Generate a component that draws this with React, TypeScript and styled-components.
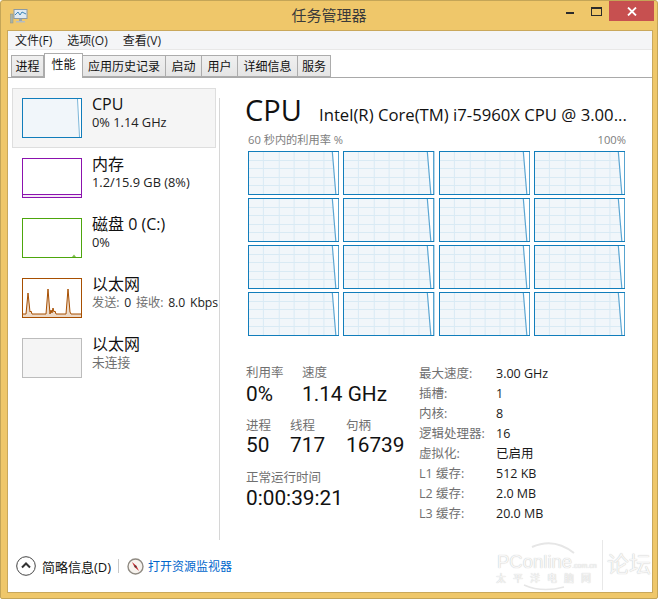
import React from "react";
import styled, { createGlobalStyle } from "styled-components";

const FONT = `"Open Sans", "Noto Sans", "Noto Sans CJK SC", sans-serif`;
const WM_FONT = `"Liberation Sans", "Noto Sans CJK SC", sans-serif`;

const Global = createGlobalStyle`
  html, body { margin: 0; padding: 0; background: #fff; }
  body { font-family: ${FONT}; color: #000; }
`;

const Page = styled.div`
  width: 660px;
  height: 600px;
  background: #fff;
  overflow: hidden;
`;
const Frame = styled.div`
  position: relative;
  box-sizing: border-box;
  width: 658px;
  height: 599px;
  background: #efc76a;
  border: 1px solid #c4a557;
  border-radius: 3px 3px 2px 2px;
  display: flex;
  flex-direction: column;
  overflow: hidden;
`;
const TitleBar = styled.div`
  position: relative;
  height: 29px;
  flex: none;
  display: flex;
  align-items: center;
  justify-content: center;
  font-size: 15px;
  color: #3a3a3a;
  padding-bottom: 2px;
  box-sizing: border-box;
`;
const AppIcon = styled.svg`
  position: absolute;
  left: 9px;
  top: 7px;
`;
const WinControls = styled.div`
  position: absolute;
  top: 0;
  right: 3px;
  display: flex;
  align-items: flex-start;
`;
const WinBtn = styled.div<{ $w: number; $bg?: string }>`
  width: ${(p) => p.$w}px;
  height: 20px;
  background: ${(p) => p.$bg ?? "transparent"};
  display: flex;
  align-items: center;
  justify-content: center;
`;
const Client = styled.div`
  box-sizing: border-box;
  margin: 0 4px 0 6px;
  height: 563px;
  flex: none;
  background: #fff;
  border: 1px solid #c9a85c;
  display: flex;
  flex-direction: column;
`;
const MenuBar = styled.div`
  box-sizing: border-box;
  height: 19px;
  flex: none;
  background: #f4f5f7;
  border-bottom: 1px solid #e8e8e8;
  display: flex;
  align-items: center;
  font-size: 12px;
  color: #1c1c1c;
  padding-left: 7px;
  gap: 15px;
`;
const TabRow = styled.div`
  box-sizing: border-box;
  height: 28px;
  flex: none;
  border-bottom: 1px solid #a9a9a9;
  display: flex;
  align-items: flex-end;
  padding-left: 3px;
`;
const Tab = styled.div<{ $w: number; $on?: boolean }>`
  box-sizing: border-box;
  width: ${(p) => p.$w}px;
  height: ${(p) => (p.$on ? 25 : 22)}px;
  margin-bottom: ${(p) => (p.$on ? -1 : 0)}px;
  border: 1px solid #acacac;
  border-left-width: ${(p) => (p.$on ? 1 : 0)}px;
  border-bottom: ${(p) => (p.$on ? "0" : "1px solid #acacac")};
  background: ${(p) => (p.$on ? "#fff" : "linear-gradient(#f0f0f0, #e5e5e5)")};
  font-size: 12px;
  line-height: ${(p) => (p.$on ? 22 : 21)}px;
  color: #111;
  text-align: center;
  white-space: nowrap;
  position: relative;
  z-index: ${(p) => (p.$on ? 1 : 0)};
  &:first-child {
    border-left-width: 1px;
  }
`;
const Body = styled.div`
  flex: 1;
  min-height: 0;
  display: flex;
  padding: 10px 0 0 4px;
`;
const Sidebar = styled.div`
  width: 207px;
  flex: none;
  overflow: hidden;
  display: flex;
  flex-direction: column;
`;
const Item = styled.div<{ $on?: boolean }>`
  box-sizing: border-box;
  width: ${(p) => (p.$on ? "204px" : "207px")};
  height: 60px;
  flex: none;
  padding: ${(p) => (p.$on ? "9px 0 0 9px" : "10px 0 0 10px")};
  display: flex;
  gap: 10px;
  background: ${(p) => (p.$on ? "#f5f5f5" : "transparent")};
  border: ${(p) => (p.$on ? "1px solid #dedede" : "0")};
`;
const Thumb = styled.svg`
  width: 60px;
  height: 40px;
  flex: none;
  display: block;
`;
const ItemText = styled.div`
  display: flex;
  flex-direction: column;
  white-space: nowrap;
  min-width: 0;
`;
const ItemName = styled.div`
  font-size: 16px;
  line-height: 20px;
  margin-top: -4px;
  color: #111;
`;
const ItemSub = styled.div<{ $wide?: boolean }>`
  font-size: ${(p) => (p.$wide ? "12.2px" : "12.8px")};
  line-height: 17px;
  color: #222;
  word-spacing: ${(p) => (p.$wide ? "1.5px" : "0")};
`;
const Muted = styled.span`
  color: #707070;
`;
const VLine = styled.div`
  width: 1px;
  height: 442px;
  margin-top: 10px;
  background: #d6d6d6;
  flex: none;
`;
const Detail = styled.div`
  flex: 1;
  min-width: 0;
  padding: 0 0 0 25px;
  display: flex;
  flex-direction: column;
`;
const Heading = styled.div`
  height: 44px;
  display: flex;
  align-items: baseline;
  white-space: nowrap;
`;
const HeadCpu = styled.div`
  font-size: 29px;
  line-height: 44px;
  width: 74px;
  color: #111;
`;
const HeadModel = styled.div`
  font-size: 16.7px;
  color: #111;
`;
const GraphHead = styled.div`
  width: 378px;
  margin-left: 3px;
  display: flex;
  justify-content: space-between;
  font-size: 11.2px;
  line-height: 16px;
  color: #7d7d7d;
`;
const GraphGrid = styled.div`
  margin: 3px 0 0 3px;
  width: 379px;
  display: grid;
  grid-template-columns: repeat(4, 91.3px);
  column-gap: 4px;
  grid-auto-rows: 44px;
  row-gap: 3px;
`;
const Cell = styled.svg`
  width: 100%;
  height: 100%;
  display: block;
`;
const Stats = styled.div`
  display: flex;
  margin-top: 29px;
`;
const StatsLeft = styled.div`
  width: 173px;
  margin-left: 1px;
  flex: none;
  display: flex;
  flex-direction: column;
`;
const StatLabel = styled.div`
  font-size: 12.5px;
  line-height: 16px;
  color: #707070;
`;
const StatValue = styled.div`
  font-family: Roboto, "Open Sans", sans-serif;
  font-size: 20.8px;
  line-height: 22px;
  color: #111;
`;
const StatRow = styled.div<{ $h: number; $drop: number }>`
  display: flex;
  height: ${(p) => p.$h}px;
  flex: none;
  ${StatValue} {
    margin-top: ${(p) => p.$drop}px;
  }
`;
const Stat = styled.div<{ $w: number }>`
  width: ${(p) => p.$w}px;
  flex: none;
  white-space: nowrap;
`;
const Specs = styled.div`
  display: grid;
  grid-template-columns: 77px auto;
  grid-auto-rows: 20px;
  font-size: 12.5px;
  line-height: 20px;
  color: #1a1a1a;
  align-self: flex-start;
  margin-top: -1px;
`;
const SpecKey = styled.div`
  color: #707070;
  white-space: nowrap;
`;
const Footer = styled.div`
  height: 46px;
  flex: none;
  display: flex;
  align-items: center;
  padding: 0 0 6px 8px;
  box-sizing: border-box;
  font-size: 13px;
`;
const FewerText = styled.div`
  margin-left: 6px;
  color: #111;
`;
const FootDivider = styled.div`
  width: 1px;
  height: 14px;
  background: #c8c8c8;
  margin: 0 8px 0 7px;
`;
const FootLink = styled.div`
  margin-left: 4px;
  font-size: 12px;
  color: #0066cc;
`;
const Watermark = styled.div`
  position: absolute;
  left: 491px;
  top: 541px;
  width: 160px;
  height: 48px;
  color: #f6f6f6;
  font-family: ${WM_FONT};
  text-shadow: 0 0 1px #b8b8b8;
  pointer-events: none;
`;
const WmArc = styled.svg`
  position: absolute;
  left: 0;
  top: -3px;
`;
const WmSite = styled.div`
  position: absolute;
  left: 5px;
  top: 10px;
  font-size: 18.5px;
  line-height: 20px;
  white-space: nowrap;
  span {
    font-size: 7px;
  }
`;
const WmCn = styled.div`
  position: absolute;
  left: 4px;
  top: 31px;
  font-size: 10px;
  line-height: 11px;
  letter-spacing: 7px;
  white-space: nowrap;
`;
const WmForum = styled.div`
  position: absolute;
  left: 115px;
  top: 10px;
  font-size: 22px;
  line-height: 26px;
  white-space: nowrap;
`;
const WmLine = styled.div`
  position: absolute;
  left: 110px;
  top: -2px;
  width: 1px;
  height: 50px;
  background: #e8e8e8;
`;

const BLUE = "#117dbb";

const CpuCell = () => {
  const w = 92, h = 44;
  return (
    <Cell viewBox={`0 0 ${w} ${h}`} preserveAspectRatio="none">
      <rect width={w} height={h} fill="#f1f6fa" />
      {[15.5, 31.5, 46.5, 61.5, 76.5].map((x) => (
        <line key={x} x1={x} x2={x} y1="0" y2={h} stroke="#d9eaf4" />
      ))}
      {[9.5, 17.5, 26.5, 34.5].map((y) => (
        <line key={y} x1="0" x2={w} y1={y} y2={y} stroke="#d9eaf4" />
      ))}
      <polygon points="85,0 92,0 92,44 88.5,44" fill="#fff" />
      <line x1="85" y1="1" x2="88.5" y2="43" stroke="#5aa5d2" strokeWidth="1.2" />
      <rect x=".5" y=".5" width={w - 1} height={h - 1} fill="none" stroke={BLUE} />
    </Cell>
  );
};

const ThumbCpu = () => (
  <Thumb viewBox="0 0 60 40">
    <rect width="60" height="40" fill="#f1f6fa" />
    <polygon points="55,0 60,0 60,40 57,40" fill="#fff" />
    <line x1="55.5" y1="1" x2="57.5" y2="39" stroke="#7ab5d8" />
    <rect x=".5" y=".5" width="59" height="39" fill="none" stroke={BLUE} />
  </Thumb>
);
const ThumbMem = () => (
  <Thumb viewBox="0 0 60 40">
    <rect width="60" height="40" fill="#fff" />
    <rect x="1" y="37" width="58" height="2" fill="#f4e9f7" />
    <line x1="1" x2="59" y1="36.5" y2="36.5" stroke="#8b12ae" />
    <rect x=".5" y=".5" width="59" height="39" fill="none" stroke="#8b12ae" />
  </Thumb>
);
const ThumbDisk = () => (
  <Thumb viewBox="0 0 60 40">
    <rect width="60" height="40" fill="#fff" />
    <polygon points="50,39 52,36.5 54,39" fill="#7dbb4e" />
    <rect x=".5" y=".5" width="59" height="39" fill="none" stroke="#4da60c" />
  </Thumb>
);
const ThumbNet = () => (
  <Thumb viewBox="0 0 60 40">
    <rect width="60" height="40" fill="#fff" />
    <path
      d="M1 36 H4 L6 15 L8 34 L9 33 L10 36 H24 L26 11 L28 36 L29 32 L30 35 L31 30 L32 34 L33 33 L34 36 H44 L46 11 L48 34 L49 36 H59 V39 H1 Z"
      fill="#edd9c7"
    />
    <path
      d="M1 36 H4 L6 15 L8 34 L9 33 L10 36 H24 L26 11 L28 36 L29 32 L30 35 L31 30 L32 34 L33 33 L34 36 H44 L46 11 L48 34 L49 36 H59"
      fill="none"
      stroke="#a74f01"
      strokeWidth="1"
    />
    <rect x=".5" y=".5" width="59" height="39" fill="none" stroke="#a74f01" />
  </Thumb>
);
const ThumbOff = () => (
  <Thumb viewBox="0 0 60 40">
    <rect x=".5" y=".5" width="59" height="39" fill="#f5f5f5" stroke="#bcbcbc" />
  </Thumb>
);

const tabs: [string, number][] = [
  ["进程", 33],
  ["性能", 39],
  ["应用历史记录", 83],
  ["启动", 36],
  ["用户", 36],
  ["详细信息", 60],
  ["服务", 33],
];

const specs: [string, string][] = [
  ["最大速度:", "3.00 GHz"],
  ["插槽:", "1"],
  ["内核:", "8"],
  ["逻辑处理器:", "16"],
  ["虚拟化:", "已启用"],
  ["L1 缓存:", "512 KB"],
  ["L2 缓存:", "2.0 MB"],
  ["L3 缓存:", "20.0 MB"],
];

export default function App() {
  return (
    <Page>
      <Global />
      <Frame>
        <TitleBar>
          <AppIcon width="18" height="16" viewBox="0 0 18 16">
            <rect x="4" y="1.5" width="13" height="9" fill="#dfeaf2" stroke="#8c9aa3" />
            <path d="M5 7 L8 4 L10 7 L12 4 L16 6" fill="none" stroke="#3f86b5" />
            <rect x="9" y="11" width="3" height="2" fill="#9aa5ab" />
            <rect x="6" y="13" width="9" height="1.5" fill="#b5bdc2" />
            <rect x="0.5" y="6" width="2.5" height="9" fill="#a9b3a6" stroke="#8a948a" strokeWidth=".5" />
          </AppIcon>
          任务管理器
          <WinControls>
            <WinBtn $w={26}>
              <svg width="9" height="8" viewBox="0 0 9 8">
                <rect x="0" y="5" width="8" height="2" fill="#2b2b2b" />
              </svg>
            </WinBtn>
            <WinBtn $w={26}>
              <svg width="11" height="9" viewBox="0 0 11 9">
                <rect x=".5" y=".5" width="10" height="8" fill="none" stroke="#2b2b2b" />
                <rect x="0" y="0" width="11" height="2" fill="#2b2b2b" />
              </svg>
            </WinBtn>
            <WinBtn $w={45} $bg="#c75050">
              <svg width="10" height="9" viewBox="0 0 10 9">
                <path d="M1 .5 L9 8.5 M9 .5 L1 8.5" stroke="#fff" strokeWidth="1.8" />
              </svg>
            </WinBtn>
          </WinControls>
        </TitleBar>
        <Client>
          <MenuBar>
            <span>文件(F)</span>
            <span>选项(O)</span>
            <span>查看(V)</span>
          </MenuBar>
          <TabRow>
            {tabs.map(([t, w]) => (
              <Tab key={t} $w={w} $on={t === "性能"}>
                {t}
              </Tab>
            ))}
          </TabRow>
          <Body>
            <Sidebar>
              <Item $on>
                <ThumbCpu />
                <ItemText>
                  <ItemName>CPU</ItemName>
                  <ItemSub>0% 1.14 GHz</ItemSub>
                </ItemText>
              </Item>
              <Item>
                <ThumbMem />
                <ItemText>
                  <ItemName>内存</ItemName>
                  <ItemSub>1.2/15.9 GB (8%)</ItemSub>
                </ItemText>
              </Item>
              <Item>
                <ThumbDisk />
                <ItemText>
                  <ItemName>磁盘 0 (C:)</ItemName>
                  <ItemSub>0%</ItemSub>
                </ItemText>
              </Item>
              <Item>
                <ThumbNet />
                <ItemText>
                  <ItemName>以太网</ItemName>
                  <ItemSub $wide>
                    <Muted>发送:</Muted> 0 <Muted>接收:</Muted> 8.0 Kbps
                  </ItemSub>
                </ItemText>
              </Item>
              <Item>
                <ThumbOff />
                <ItemText>
                  <ItemName>以太网</ItemName>
                  <ItemSub>
                    <Muted>未连接</Muted>
                  </ItemSub>
                </ItemText>
              </Item>
            </Sidebar>
            <VLine />
            <Detail>
              <Heading>
                <HeadCpu>CPU</HeadCpu>
                <HeadModel>Intel(R) Core(TM) i7-5960X CPU @ 3.00...</HeadModel>
              </Heading>
              <GraphHead>
                <span>60 秒内的利用率 %</span>
                <span>100%</span>
              </GraphHead>
              <GraphGrid>
                {Array.from({ length: 16 }, (_, i) => (
                  <CpuCell key={i} />
                ))}
              </GraphGrid>
              <Stats>
                <StatsLeft>
                  <StatRow $h={53} $drop={2}>
                    <Stat $w={56}>
                      <StatLabel>利用率</StatLabel>
                      <StatValue>0%</StatValue>
                    </Stat>
                    <Stat $w={110}>
                      <StatLabel>速度</StatLabel>
                      <StatValue>1.14 GHz</StatValue>
                    </Stat>
                  </StatRow>
                  <StatRow $h={52} $drop={0}>
                    <Stat $w={44}>
                      <StatLabel>进程</StatLabel>
                      <StatValue>50</StatValue>
                    </Stat>
                    <Stat $w={56}>
                      <StatLabel>线程</StatLabel>
                      <StatValue>717</StatValue>
                    </Stat>
                    <Stat $w={70}>
                      <StatLabel>句柄</StatLabel>
                      <StatValue>16739</StatValue>
                    </Stat>
                  </StatRow>
                  <StatRow $h={46} $drop={1}>
                    <Stat $w={150}>
                      <StatLabel>正常运行时间</StatLabel>
                      <StatValue>0:00:39:21</StatValue>
                    </Stat>
                  </StatRow>
                </StatsLeft>
                <Specs>
                  {specs.map(([k, v]) => (
                    <React.Fragment key={k}>
                      <SpecKey>{k}</SpecKey>
                      <div>{v}</div>
                    </React.Fragment>
                  ))}
                </Specs>
              </Stats>
            </Detail>
          </Body>
          <Footer>
            <svg width="20" height="20" viewBox="0 0 20 20">
              <circle cx="10" cy="10" r="9.3" fill="#fff" stroke="#444" />
              <path d="M6 11.5 L10 7.5 L14 11.5" fill="none" stroke="#333" strokeWidth="2" />
            </svg>
            <FewerText>简略信息(D)</FewerText>
            <FootDivider />
            <svg width="17" height="17" viewBox="0 0 17 17">
              <circle cx="8.5" cy="8.5" r="7.5" fill="#f7f3ee" stroke="#8f8a82" strokeWidth="1.4" />
              <path d="M5 4 L9.5 8 L12 13 L7.5 9 Z" fill="#c0282d" />
              <circle cx="8.5" cy="8.5" r="1" fill="#444" />
            </svg>
            <FootLink>打开资源监视器</FootLink>
          </Footer>
        </Client>
        <Watermark>
          <WmArc width="110" height="56" viewBox="0 0 110 56">
            <path d="M40 8 Q62 -2 82 14" fill="none" stroke="#e6e6e6" strokeWidth="2" />
            <path d="M32 46 Q50 54 72 48" fill="none" stroke="#e6e6e6" strokeWidth="1.5" />
          </WmArc>
          <WmSite>
            PConline<span>.com.cn</span>
          </WmSite>
          <WmCn>太平洋电脑网</WmCn>
          <WmLine />
          <WmForum>论坛</WmForum>
        </Watermark>
      </Frame>
    </Page>
  );
}
